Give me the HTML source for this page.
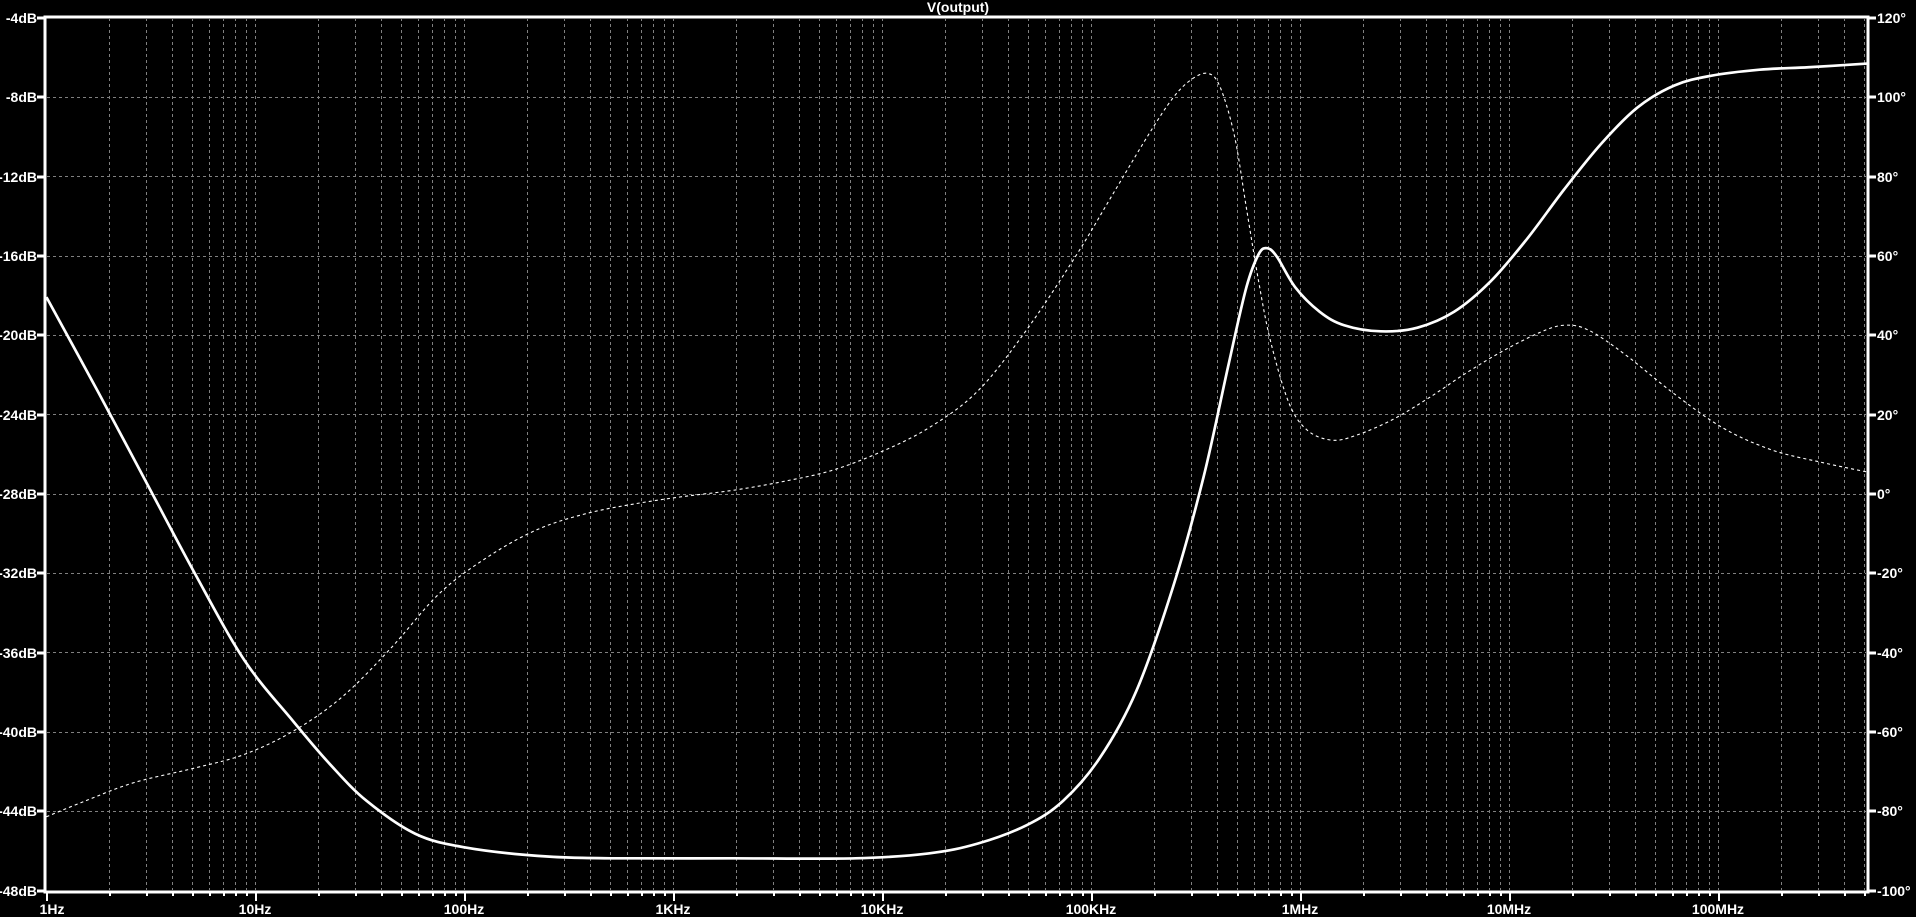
<!DOCTYPE html>
<html><head><meta charset="utf-8"><style>
html,body{margin:0;padding:0;background:#000;width:1916px;height:917px;overflow:hidden}
svg{position:absolute;left:0;top:0}
text{font-family:"Liberation Sans",sans-serif;font-size:14px;fill:#fff;font-weight:bold}
</style></head><body>
<svg width="1916" height="917" viewBox="0 0 1916 917">
<defs>
<pattern id="vg" patternUnits="userSpaceOnUse" x="46" y="18" width="209" height="917">
<g stroke="#808080" stroke-width="1" stroke-dasharray="3 3">
<line x1="0.5" y1="0" x2="0.5" y2="917"/>
<line x1="63.5" y1="0" x2="63.5" y2="917"/>
<line x1="100.5" y1="0" x2="100.5" y2="917"/>
<line x1="126.5" y1="0" x2="126.5" y2="917"/>
<line x1="146.5" y1="0" x2="146.5" y2="917"/>
<line x1="163.5" y1="0" x2="163.5" y2="917"/>
<line x1="177.5" y1="0" x2="177.5" y2="917"/>
<line x1="189.5" y1="0" x2="189.5" y2="917"/>
<line x1="200.5" y1="0" x2="200.5" y2="917"/>
</g></pattern>
<pattern id="tk" patternUnits="userSpaceOnUse" x="46" y="0" width="209" height="917">
<g stroke="#fff" stroke-width="2">
<line x1="1" y1="891" x2="1" y2="901"/>
<line x1="64" y1="891" x2="64" y2="896"/>
<line x1="101" y1="891" x2="101" y2="896"/>
<line x1="127" y1="891" x2="127" y2="896"/>
<line x1="147" y1="891" x2="147" y2="896"/>
<line x1="164" y1="891" x2="164" y2="896"/>
<line x1="178" y1="891" x2="178" y2="896"/>
<line x1="190" y1="891" x2="190" y2="896"/>
<line x1="201" y1="891" x2="201" y2="896"/>
</g></pattern>
</defs>
<rect x="47" y="19" width="1819" height="871" fill="url(#vg)"/>
<rect x="46" y="891" width="1821" height="12" fill="url(#tk)"/>
<g stroke="#808080" stroke-width="1" stroke-dasharray="3 3">
<line x1="47" x2="1866" y1="97.5" y2="97.5"/><line x1="47" x2="1866" y1="176.5" y2="176.5"/>
<line x1="47" x2="1866" y1="256.5" y2="256.5"/><line x1="47" x2="1866" y1="335.5" y2="335.5"/>
<line x1="47" x2="1866" y1="414.5" y2="414.5"/><line x1="47" x2="1866" y1="494.5" y2="494.5"/>
<line x1="47" x2="1866" y1="573.5" y2="573.5"/><line x1="47" x2="1866" y1="652.5" y2="652.5"/>
<line x1="47" x2="1866" y1="732.5" y2="732.5"/><line x1="47" x2="1866" y1="811.5" y2="811.5"/>
</g>
<rect x="45" y="17" width="1823" height="875" fill="none" stroke="#fff" stroke-width="3"/>
<g stroke="#fff" stroke-width="3">
<line x1="37" x2="45" y1="18" y2="18"/><line x1="37" x2="45" y1="97" y2="97"/><line x1="37" x2="45" y1="177" y2="177"/>
<line x1="37" x2="45" y1="256" y2="256"/><line x1="37" x2="45" y1="335" y2="335"/><line x1="37" x2="45" y1="415" y2="415"/>
<line x1="37" x2="45" y1="494" y2="494"/><line x1="37" x2="45" y1="573" y2="573"/><line x1="37" x2="45" y1="653" y2="653"/>
<line x1="37" x2="45" y1="732" y2="732"/><line x1="37" x2="45" y1="811" y2="811"/><line x1="37" x2="45" y1="891" y2="891"/>
<line x1="1868" x2="1876" y1="18" y2="18"/><line x1="1868" x2="1876" y1="97" y2="97"/><line x1="1868" x2="1876" y1="177" y2="177"/>
<line x1="1868" x2="1876" y1="256" y2="256"/><line x1="1868" x2="1876" y1="335" y2="335"/><line x1="1868" x2="1876" y1="415" y2="415"/>
<line x1="1868" x2="1876" y1="494" y2="494"/><line x1="1868" x2="1876" y1="573" y2="573"/><line x1="1868" x2="1876" y1="653" y2="653"/>
<line x1="1868" x2="1876" y1="732" y2="732"/><line x1="1868" x2="1876" y1="811" y2="811"/><line x1="1868" x2="1876" y1="891" y2="891"/>
</g>
<text x="958" y="12" text-anchor="middle" font-size="12">V(output)</text>
<g text-anchor="end">
<text x="37" y="23">-4dB</text><text x="37" y="102">-8dB</text><text x="37" y="182">-12dB</text>
<text x="37" y="261">-16dB</text><text x="37" y="340">-20dB</text><text x="37" y="420">-24dB</text>
<text x="37" y="499">-28dB</text><text x="37" y="578">-32dB</text><text x="37" y="658">-36dB</text>
<text x="37" y="737">-40dB</text><text x="37" y="816">-44dB</text><text x="37" y="896">-48dB</text>
</g>
<g>
<text x="1877" y="23">120°</text><text x="1877" y="102">100°</text><text x="1877" y="182">80°</text>
<text x="1877" y="261">60°</text><text x="1877" y="340">40°</text><text x="1877" y="420">20°</text>
<text x="1877" y="499">0°</text><text x="1877" y="578">-20°</text><text x="1877" y="658">-40°</text>
<text x="1877" y="737">-60°</text><text x="1877" y="816">-80°</text><text x="1877" y="896">-100°</text>
</g>
<g text-anchor="middle">
<text x="52" y="914">1Hz</text><text x="255" y="914">10Hz</text><text x="464" y="914">100Hz</text>
<text x="673" y="914">1KHz</text><text x="882" y="914">10KHz</text><text x="1091" y="914">100KHz</text>
<text x="1300" y="914">1MHz</text><text x="1509" y="914">10MHz</text><text x="1718" y="914">100MHz</text>
</g>
</svg>
<svg width="1916" height="917" viewBox="0 0 1568 750" preserveAspectRatio="none">
<path id="c1" fill="none" stroke="#fff" stroke-width="2.2" stroke-linejoin="round" data-p="38,243 80,320 120,395 160,470 200,540 240,590 270,625 300,655 340,682 380,693 440,700 500,702 600,702 700,702 760,698 800,690 840,675 870,655 900,620 930,565 960,480 985,390 1005,300 1020,235 1030,208 1037,203 1045,210 1060,235 1080,255 1100,266 1130,271 1160,268 1190,255 1220,230 1250,195 1280,155 1310,118 1340,88 1370,70 1400,62 1440,57 1480,55 1528,52"/>
<path id="c2" fill="none" stroke="#fff" stroke-width="0.9" stroke-dasharray="2.5 2.5" stroke-linejoin="round" data-p="38,668 70,655 110,640 160,628 200,617 240,598 280,570 320,530 360,485 400,455 440,433 480,420 520,412 560,406 600,401 640,394 680,385 720,370 760,350 800,320 840,270 880,210 910,160 940,110 960,80 975,65 988,60 998,70 1010,110 1020,170 1030,230 1040,280 1055,330 1070,352 1090,360 1110,356 1140,343 1170,325 1200,305 1230,287 1260,272 1280,266 1300,270 1330,290 1370,322 1410,350 1450,368 1490,378 1528,386"/>
</svg>
<script>
['c1','c2'].forEach(function(id){
var el=document.getElementById(id);
var p=el.getAttribute('data-p').split(' ').map(function(s){return s.split(',').map(Number);});
var d='M'+p[0][0]+','+p[0][1];
for(var i=0;i<p.length-1;i++){
var p0=p[i-1]||p[i],p1=p[i],p2=p[i+1],p3=p[i+2]||p2;
var c1x=p1[0]+(p2[0]-p0[0])/6,c1y=p1[1]+(p2[1]-p0[1])/6;
var c2x=p2[0]-(p3[0]-p1[0])/6,c2y=p2[1]-(p3[1]-p1[1])/6;
d+=' C'+c1x.toFixed(1)+','+c1y.toFixed(1)+' '+c2x.toFixed(1)+','+c2y.toFixed(1)+' '+p2[0]+','+p2[1];
}
el.setAttribute('d',d);
});
</script>
</body></html>
